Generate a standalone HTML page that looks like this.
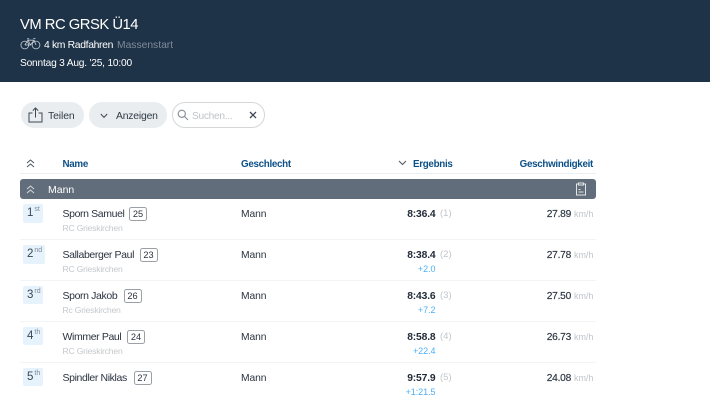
<!DOCTYPE html>
<html lang="de"><head><meta charset="utf-8"><title>VM RC GRSK Ü14</title>
<style>
*{box-sizing:border-box}
html,body{margin:0;padding:0}
body{width:710px;height:400px;overflow:hidden;background:#fff;font-family:"Liberation Sans",sans-serif;position:relative;color:#2a3440}
.t{position:absolute;white-space:nowrap;line-height:14px;transform:translateY(1px)}
.r{text-align:right}
.hd{position:absolute;left:0;top:0;width:710px;height:81.5px;background:#1f3348}
.btn{position:absolute;top:102px;height:26px;border-radius:13px;background:#e9edef}
.th{font-size:9.8px;font-weight:bold;color:#0c5088;letter-spacing:-.3px;margin-top:.5px}
.name{font-size:10.5px;color:#2a3440;letter-spacing:-.38px}
.club{font-size:8.6px;color:#c4c8cc;letter-spacing:-.2px}
.sex{font-size:10.3px;color:#2a3440;letter-spacing:-.1px;margin-top:1px}
.time{font-size:10.3px;font-weight:bold;color:#1f2937;letter-spacing:-.15px;margin-top:1px}
.pos{font-size:9.5px;color:#c2c6ca}
.gap{font-size:9px;color:#4db0f5;letter-spacing:-.05px}
.spd{font-size:10.2px;color:#2f3945;-webkit-text-stroke:.2px #2f3945;letter-spacing:-.25px;margin-top:1px}
.kmh{font-size:9px;color:#bfc4c9;letter-spacing:-.05px}
.rank{position:absolute;left:23px;height:18.5px;background:#e6f3fc;border-radius:2px;font-size:11.5px;line-height:19px;padding-left:4px;color:#3a4654}
.rank sup{font-size:7px;line-height:0;vertical-align:5px;color:#7c8896;margin-left:1px}
.bib{position:absolute;height:14.5px;border:1px solid #9aa0a6;border-radius:2.5px;font-size:9.2px;line-height:13px;text-align:center;width:18px;color:#2a3440}
.ln{position:absolute;left:20px;width:576px;height:1px;background:#f3f4f5}
svg{position:absolute;display:block}
</style></head><body>
<div class="hd"></div>
<div class="t" style="left:20px;top:15px;font-size:14.8px;line-height:18px;color:#fff;letter-spacing:-.5px">VM RC GRSK Ü14</div>
<svg style="left:20px;top:37px" width="21" height="13" viewBox="0 0 21 13" fill="none" stroke="#c9cfd5" stroke-width=".8"><circle cx="4.800" cy="8" r="3.900"/><circle cx="16" cy="8" r="3.900"/><path d="M4.800 8 8 3.200h6L16 8M8 3.200 10.500 8 14 3.200M7 1.800h2.200M13.200 1.400h2.300M10.500 8H4.800"/></svg>
<div class="t" style="left:44px;top:38px;font-size:10.4px;color:#fff;letter-spacing:-.35px">4 km Radfahren</div>
<div class="t" style="left:117px;top:38px;font-size:10.3px;color:#7f8b98">Massenstart</div>
<div class="t" style="left:20px;top:56px;font-size:10.2px;color:#fff;letter-spacing:-.2px">Sonntag 3 Aug. '25, 10:00</div>

<div class="btn" style="left:21px;width:63px"></div>
<svg style="left:28px;top:107px" width="15" height="16" viewBox="0 0 15 16" fill="none" stroke="#3d4854" stroke-width="1"><path d="M4.500 6H1v9h13V6h-3.500M7.500 10.500V1M4.800 3.600 7.500 1l2.700 2.600"/></svg>
<div class="t" style="left:48px;top:109px;font-size:10.4px;color:#2f3a46;letter-spacing:-.1px">Teilen</div>
<div class="btn" style="left:89px;width:78px"></div>
<svg style="left:100px;top:113px" width="8" height="6" viewBox="0 0 8 6" fill="none" stroke="#3d4854" stroke-width="1"><path d="M.8 1 4 4.400 7.200 1"/></svg>
<div class="t" style="left:116px;top:109px;font-size:10.4px;color:#2f3a46;letter-spacing:-.2px">Anzeigen</div>
<div style="position:absolute;left:172px;top:102px;width:93px;height:26px;border:1px solid #d3d7da;border-radius:13px;background:#fff"></div>
<svg style="left:177px;top:109px" width="12" height="12" viewBox="0 0 12 12" fill="none" stroke="#8b939b" stroke-width="1.200"><circle cx="4.800" cy="4.800" r="3.600"/><path d="M7.500 7.500 11 11"/></svg>
<div class="t" style="left:192px;top:109px;font-size:10.2px;color:#c0c4c8;letter-spacing:-.3px">Suchen...</div>
<svg style="left:249px;top:111px" width="8" height="8" viewBox="0 0 8 8" fill="none" stroke="#3d4854" stroke-width="1.300"><path d="M1 1l6 6M7 1 1 7"/></svg>

<svg style="left:26px;top:159px" width="9" height="9" viewBox="0 0 9 9" fill="none" stroke="#4a5561" stroke-width="1"><path d="M1 4 4.500 1 8 4M1 8 4.500 5 8 8"/></svg>
<div class="t th" style="left:62.500px;top:156px">Name</div>
<div class="t th" style="left:241px;top:156px">Geschlecht</div>
<svg style="left:398px;top:160px" width="9" height="6" viewBox="0 0 9 6" fill="none" stroke="#4a5561" stroke-width="1"><path d="M1 1l3.500 3.500L8 1"/></svg>
<div class="t th" style="left:413px;top:156px">Ergebnis</div>
<div class="t th r" style="right:117px;top:156px">Geschwindigkeit</div>
<div class="ln" style="top:173px;background:#eceef0"></div>

<div style="position:absolute;left:20px;top:179px;width:576px;height:20px;background:#616d7a;border-radius:3px"></div>
<svg style="left:26px;top:185px" width="9" height="9" viewBox="0 0 9 9" fill="none" stroke="#d5d9dd" stroke-width="1"><path d="M1 4 4.500 1 8 4M1 8 4.500 5 8 8"/></svg>
<div class="t" style="left:48px;top:182px;font-size:10.500px;color:#fff">Mann</div>
<svg style="left:575px;top:182px" width="12" height="14" viewBox="0 0 12 14" fill="none" stroke="#e2e5e8" stroke-width="1"><path d="M3.500 2H1.500v11h9V2h-2M3.500 1h5v2h-5zM3.500 7.500h2M3.500 10h5"/></svg>

<div class="rank" style="top:204px;width:20px">1<sup>st</sup></div>
<div class="t name" style="left:62.500px;top:206px">Sporn Samuel</div>
<div class="bib" style="left:129px;top:206.500px">25</div>
<div class="t club" style="left:62.500px;top:220px">RC Grieskirchen</div>
<div class="t sex" style="left:241px;top:206px">Mann</div>
<div class="t time r" style="right:274.500px;top:206px">8:36.4</div>
<div class="t pos" style="left:440px;top:206px">(1)</div>
<div class="t spd r" style="right:139px;top:206px">27.89</div>
<div class="t kmh" style="left:574px;top:206px">km/h</div>
<div class="ln" style="top:239px"></div>

<div class="rank" style="top:245px;width:22px">2<sup>nd</sup></div>
<div class="t name" style="left:62.500px;top:247px">Sallaberger Paul</div>
<div class="bib" style="left:139.500px;top:247.500px">23</div>
<div class="t club" style="left:62.500px;top:261px">RC Grieskirchen</div>
<div class="t sex" style="left:241px;top:247px">Mann</div>
<div class="t time r" style="right:274.500px;top:247px">8:38.4</div>
<div class="t pos" style="left:440px;top:247px">(2)</div>
<div class="t gap r" style="right:274.500px;top:261px">+2.0</div>
<div class="t spd r" style="right:139px;top:247px">27.78</div>
<div class="t kmh" style="left:574px;top:247px">km/h</div>
<div class="ln" style="top:280px"></div>

<div class="rank" style="top:285.500px;width:20px">3<sup>rd</sup></div>
<div class="t name" style="left:62.500px;top:288px">Sporn Jakob</div>
<div class="bib" style="left:123.500px;top:288.500px">26</div>
<div class="t club" style="left:62.500px;top:302px">Rc Grieskirchen</div>
<div class="t sex" style="left:241px;top:288px">Mann</div>
<div class="t time r" style="right:274.500px;top:288px">8:43.6</div>
<div class="t pos" style="left:440px;top:288px">(3)</div>
<div class="t gap r" style="right:274.500px;top:302px">+7.2</div>
<div class="t spd r" style="right:139px;top:288px">27.50</div>
<div class="t kmh" style="left:574px;top:288px">km/h</div>
<div class="ln" style="top:321px"></div>

<div class="rank" style="top:326.500px;width:20px">4<sup>th</sup></div>
<div class="t name" style="left:62.500px;top:329px">Wimmer Paul</div>
<div class="bib" style="left:127px;top:329.500px">24</div>
<div class="t club" style="left:62.500px;top:343px">RC Grieskirchen</div>
<div class="t sex" style="left:241px;top:329px">Mann</div>
<div class="t time r" style="right:274.500px;top:329px">8:58.8</div>
<div class="t pos" style="left:440px;top:329px">(4)</div>
<div class="t gap r" style="right:274.500px;top:343px">+22.4</div>
<div class="t spd r" style="right:139px;top:329px">26.73</div>
<div class="t kmh" style="left:574px;top:329px">km/h</div>
<div class="ln" style="top:362px"></div>

<div class="rank" style="top:367.500px;width:20px">5<sup>th</sup></div>
<div class="t name" style="left:62.500px;top:370px">Spindler Niklas</div>
<div class="bib" style="left:133.500px;top:370.500px">27</div>
<div class="t sex" style="left:241px;top:370px">Mann</div>
<div class="t time r" style="right:274.500px;top:370px">9:57.9</div>
<div class="t pos" style="left:440px;top:370px">(5)</div>
<div class="t gap r" style="right:274.500px;top:384px">+1:21.5</div>
<div class="t spd r" style="right:139px;top:370px">24.08</div>
<div class="t kmh" style="left:574px;top:370px">km/h</div>
</body></html>
